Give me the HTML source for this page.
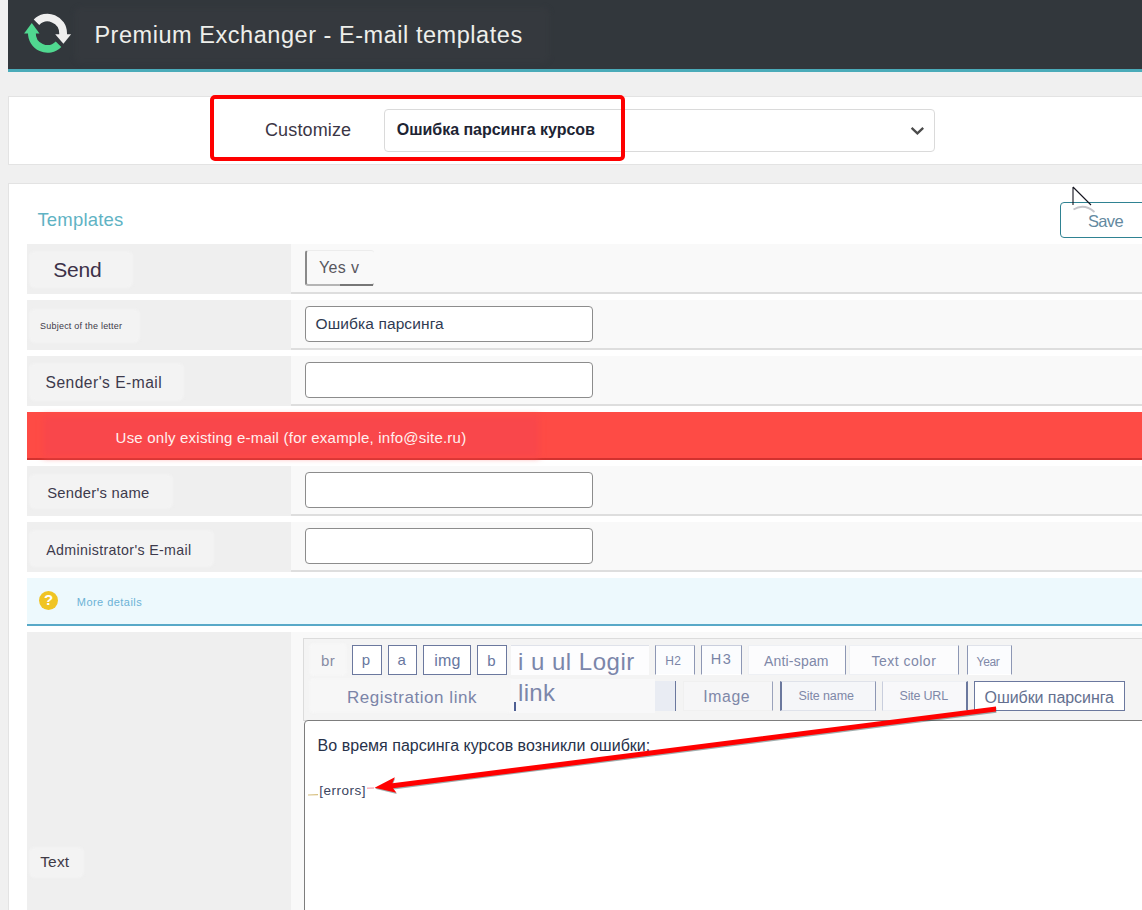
<!DOCTYPE html>
<html><head><meta charset="utf-8"><style>
*{box-sizing:border-box;margin:0;padding:0}
html,body{width:1142px;height:910px;overflow:hidden;background:#f0f0f0;font-family:"Liberation Sans",sans-serif;position:relative}
.a{position:absolute}
.t{position:absolute;white-space:nowrap;line-height:1}
.lc{position:absolute;left:27px;width:264px;background:#efefef}
.rc{position:absolute;left:291px;width:860px;background:#f9f9f9;border-bottom:2px solid #dedede}
.inp{position:absolute;left:305px;width:288px;height:36px;background:#fff;border:1px solid #8c8c8c;border-radius:4px}
.bt{position:absolute;height:30px;border:1px solid #6b789e;background:#fff}

</style></head><body>
<div class="a" style="left:8px;top:0;width:1134px;height:69px;background:#32373c"></div>
<div class="a" style="left:8px;top:69px;width:1134px;height:3px;background:#4aabb9"></div>
<div class="a" style="left:74px;top:7px;width:476px;height:56px;background:#35393e;border-radius:8px;filter:blur(2px)"></div>
<svg class="a" style="left:0;top:0" width="90" height="70" viewBox="0 0 90 70">
 <path d="M36.47 22.17 A15.6 15.6 0 0 1 63.1 33.2 L63.1 35" fill="none" stroke="#efefef" stroke-width="7.8"/>
 <path d="M55.2 34.2 L71.1 34.2 L63.4 43.8 Z" fill="#efefef"/>
 <path d="M31.9 32.5 A15.6 15.6 0 0 0 58.53 44.23" fill="none" stroke="#50d890" stroke-width="7.8"/>
 <path d="M24.1 33.6 L39.5 33.6 L31.8 22.9 Z" fill="#50d890"/>
</svg>
<div class="a" style="left:8px;top:96px;width:1140px;height:69px;background:#fff;border:1px solid #e3e3e3"></div>
<div class="a" style="left:384px;top:109px;width:551px;height:43px;background:#fff;border:1px solid #dadada;border-radius:4px"></div>
<svg class="a" style="left:905px;top:120px" width="24" height="20" viewBox="0 0 24 20"><path d="M6.6 7.9 L12.4 13.4 L18.2 7.9" fill="none" stroke="#4b4b4b" stroke-width="2.3"/></svg>

<div class="a" style="left:8px;top:183px;width:1140px;height:740px;background:#fff;border:1px solid #e3e3e3"></div>
<div class="a" style="left:1060px;top:202px;width:100px;height:36px;border:1.6px solid #2f8292;border-radius:4px;background:#fff"></div>

<div class="lc" style="top:244px;height:50px"></div><div class="rc" style="top:244px;height:50px"></div>
<div class="lc" style="top:300px;height:50px"></div><div class="rc" style="top:300px;height:50px"></div>
<div class="lc" style="top:356px;height:50px"></div><div class="rc" style="top:356px;height:50px"></div>
<div class="a" style="left:27px;top:412px;width:1120px;height:48px;background:#fe4b45;border-bottom:2px solid #d2322f"></div>
<div class="a" style="left:43px;top:416px;width:496px;height:41px;background:#f9474b;filter:blur(3px)"></div>
<div class="lc" style="top:466px;height:50px"></div><div class="rc" style="top:466px;height:50px"></div>
<div class="lc" style="top:522px;height:50px"></div><div class="rc" style="top:522px;height:50px"></div>
<div class="a" style="left:27px;top:578px;width:1120px;height:48px;background:#edf9fd;border-bottom:2px solid #58a9c8"></div>
<div class="lc" style="top:632px;height:300px"></div><div class="a" style="left:291px;top:632px;width:860px;height:300px;background:#f9f9f9"></div>


<div class="a" style="left:29px;top:251px;width:104px;height:37px;background:#f3f3f3;border-radius:6px;filter:blur(1px)"></div>
<div class="a" style="left:29px;top:309px;width:111px;height:34px;background:#f3f3f3;border-radius:6px;filter:blur(1px)"></div>
<div class="a" style="left:29px;top:363px;width:155px;height:38px;background:#f3f3f3;border-radius:6px;filter:blur(1px)"></div>
<div class="a" style="left:29px;top:474px;width:144px;height:35px;background:#f3f3f3;border-radius:6px;filter:blur(1px)"></div>
<div class="a" style="left:29px;top:530px;width:185px;height:37px;background:#f3f3f3;border-radius:6px;filter:blur(1px)"></div>
<div class="a" style="left:29px;top:847px;width:55px;height:31px;background:#f3f3f3;border-radius:6px;filter:blur(1px)"></div>
<div class="a" style="left:305px;top:250px;width:69px;height:36px;background:#f9f9f9;border-left:2px solid #8a8a8a;border-bottom:2px solid #b5b5b5;border-top:1px solid #ececec;border-radius:3px"></div>
<div class="a" style="left:340px;top:284px;width:33px;height:2px;background:#777"></div>
<div class="inp" style="top:306px"></div>
<div class="inp" style="top:362px"></div>
<div class="inp" style="top:472px"></div>
<div class="inp" style="top:528px"></div>
<div class="a" style="left:38.9px;top:590.8px;width:19.4px;height:19.4px;border-radius:50%;background:#f0c424"></div>
<div class="a" style="left:38.9px;top:592px;width:19.4px;text-align:center;font-size:15px;line-height:1;font-weight:bold;color:#fff">?</div>

<div class="a" style="left:303px;top:638px;width:850px;height:83px;background:#f4f4f4;border:1px solid #dcdcdc"></div>
<div class="a" style="left:309px;top:643px;width:38px;height:33px;background:#f7f7f7;border-radius:5px;filter:blur(1px)"></div>
<div class="a" style="left:309px;top:678px;width:205px;height:35px;background:#f7f7f7;border-radius:5px;filter:blur(1px)"></div>
<div class="bt" style="left:352px;top:645px;width:30px"></div>
<div class="bt" style="left:388px;top:645px;width:29px"></div>
<div class="bt" style="left:423px;top:645px;width:48px"></div>
<div class="bt" style="left:477px;top:645px;width:30px"></div>
<div class="a" style="left:511px;top:645px;width:138px;height:30px;background:#fdfdfe;border-top:1px solid #dfe2ea"></div>
<div class="bt" style="left:655px;top:645px;width:40px;border-color:#c9cedd #8d97b4 #fff #8d97b4;background:#fbfcfe"></div>
<div class="bt" style="left:701px;top:645px;width:41px;border-color:#c9cedd #8d97b4 #fff #8d97b4;background:#fbfcfe"></div>
<div class="bt" style="left:748px;top:645px;width:98px;border-color:#eef0f4 #8d97b4 #eef0f4 #eef0f4;background:#fcfcfd"></div>
<div class="bt" style="left:849px;top:645px;width:110px;border-color:#eef0f4 #8d97b4 #eef0f4 #eef0f4;background:#fcfcfd"></div>
<div class="bt" style="left:967px;top:645px;width:45px;border-color:#dfe2ea #8d97b4 #fff #8d97b4;background:#fbfcfe"></div>
<div class="a" style="left:511px;top:679px;width:144px;height:34px;background:#f8f8f9"></div>
<div class="a" style="left:655px;top:681px;width:21px;height:30px;background:#e9ecf3;border-right:1.5px solid #6b789e"></div>
<div class="a" style="left:514px;top:702px;width:2px;height:9px;background:#4e5f93"></div>
<div class="bt" style="left:683px;top:681px;width:90px;border-color:#f0f0f0 #9aa2bb #f0f0f0 #f0f0f0;background:#f6f6f7"></div>
<div class="bt" style="left:780px;top:681px;width:96px;border-color:#dfe2ea #8d97b4 #dfe2ea #6b789e;border-left-width:2px;background:#f5f6f9"></div>
<div class="bt" style="left:882px;top:681px;width:86px;border-color:#eef0f4 #6b789e #eef0f4 #c9cedd;border-right-width:2px;background:#f8f8fa"></div>
<div class="bt" style="left:974px;top:681px;width:151px"></div>
<div class="a" style="left:304px;top:720px;width:850px;height:200px;background:#fff;border:1px solid #7d7d7d;border-radius:4px"></div>

<div class="t" style="left:94.40px;top:24.33px;font-size:23.5px;letter-spacing:0.543px;color:#eeefeb;">Premium Exchanger - E-mail templates</div>
<div class="t" style="left:265.00px;top:121.41px;font-size:18px;letter-spacing:0.125px;color:#3b3645;">Customize</div>
<div class="t" style="left:396.80px;top:122.22px;font-size:16px;letter-spacing:-0.024px;color:#1d2433;font-weight:bold">Ошибка парсинга курсов</div>
<div class="t" style="left:37.40px;top:210.66px;font-size:18.5px;letter-spacing:0.188px;color:#5fb3c4;">Templates</div>
<div class="t" style="left:1088.00px;top:212.57px;font-size:16.5px;letter-spacing:-0.667px;color:#6389a0;">Save</div>
<div class="t" style="left:53.20px;top:259.00px;font-size:21px;letter-spacing:-0.167px;color:#3c3148;">Send</div>
<div class="t" style="left:40.00px;top:322.16px;font-size:9px;letter-spacing:0.225px;color:#3e3a48;">Subject of the letter</div>
<div class="t" style="left:45.60px;top:375.08px;font-size:15.6px;letter-spacing:0.464px;color:#3d3a4c;">Sender's E-mail</div>
<div class="t" style="left:115.60px;top:429.73px;font-size:15px;letter-spacing:0.216px;color:#fff0ee;">Use only existing e-mail (for example, info@site.ru)</div>
<div class="t" style="left:47.20px;top:486.21px;font-size:14.8px;letter-spacing:0.250px;color:#3d3a4c;">Sender's name</div>
<div class="t" style="left:46.20px;top:542.55px;font-size:14.2px;letter-spacing:0.357px;color:#3d3a4c;">Administrator's E-mail</div>
<div class="t" style="left:76.80px;top:596.75px;font-size:11px;letter-spacing:0.455px;color:#6cb2d6;">More details</div>
<div class="t" style="left:40.20px;top:854.37px;font-size:15.5px;letter-spacing:0.167px;color:#3f3a46;">Text</div>
<div class="t" style="left:319.00px;top:260.02px;font-size:16px;letter-spacing:0.375px;color:#58575e;">Yes v</div>
<div class="t" style="left:315.60px;top:316.27px;font-size:15.5px;letter-spacing:0.107px;color:#2f3a52;">Ошибка парсинга</div>
<div class="t" style="left:317.60px;top:738.32px;font-size:16px;letter-spacing:0.025px;color:#27324a;">Во время парсинга курсов возникли ошибки:</div>
<div class="t" style="left:319.20px;top:783.78px;font-size:13.5px;letter-spacing:0.500px;color:#3b4560;">[errors]</div>
<div class="t" style="left:321.00px;top:652.52px;font-size:15px;letter-spacing:0.500px;color:#878ca4;">br</div>
<div class="t" style="left:361.80px;top:651.92px;font-size:15px;letter-spacing:0.000px;color:#6877a0;">p</div>
<div class="t" style="left:397.60px;top:651.92px;font-size:15px;letter-spacing:0.000px;color:#6877a0;">a</div>
<div class="t" style="left:434.20px;top:652.82px;font-size:16px;letter-spacing:0.250px;color:#6877a0;">img</div>
<div class="t" style="left:487.20px;top:652.72px;font-size:15px;letter-spacing:0.000px;color:#6877a0;">b</div>
<div class="t" style="left:518.00px;top:649.88px;font-size:24px;letter-spacing:0.500px;color:#7b86aa;">i u ul Logir</div>
<div class="t" style="left:665.20px;top:654.54px;font-size:12px;letter-spacing:0.500px;color:#7a84a6;">H2</div>
<div class="t" style="left:710.80px;top:651.78px;font-size:14.5px;letter-spacing:1.500px;color:#7a84a6;">H3</div>
<div class="t" style="left:764.00px;top:653.83px;font-size:14px;letter-spacing:0.187px;color:#7f88a8;">Anti-spam</div>
<div class="t" style="left:871.40px;top:653.83px;font-size:14px;letter-spacing:0.500px;color:#7f88a8;">Text color</div>
<div class="t" style="left:976.60px;top:655.74px;font-size:12px;letter-spacing:-0.333px;color:#7f88a8;">Year</div>
<div class="t" style="left:347.00px;top:689.22px;font-size:17px;letter-spacing:0.531px;color:#7b84a8;">Registration link</div>
<div class="t" style="left:518.00px;top:681.18px;font-size:24px;letter-spacing:0.333px;color:#7b86aa;">link</div>
<div class="t" style="left:703.20px;top:689.40px;font-size:15.8px;letter-spacing:0.625px;color:#7f88a8;">Image</div>
<div class="t" style="left:798.60px;top:690.19px;font-size:12.5px;letter-spacing:-0.125px;color:#7f88a8;">Site name</div>
<div class="t" style="left:899.60px;top:690.19px;font-size:12.5px;letter-spacing:-0.214px;color:#7f88a8;">Site URL</div>
<div class="t" style="left:984.60px;top:689.82px;font-size:16px;letter-spacing:-0.071px;color:#64708f;">Ошибки парсинга</div>
<div class="a" style="left:210px;top:95px;width:415px;height:66px;border:4px solid #fe0000;border-radius:5px"></div>
<svg class="a" style="left:0;top:0" width="1142" height="910" viewBox="0 0 1142 910">
 <path d="M374.6 787.7 L394.8 777.2 L392.4 783.3 L996 706.6 L996 711.6 L393 788.3 L396.5 792.8 Z" fill="#2c4a4a" opacity="0.45" transform="translate(0.4,1.1)"/>
 <path d="M374.6 787.7 L394.8 777.2 L392.4 783.3 L996 706.6 L996 711.6 L393 788.3 L396.5 792.8 Z" fill="#ff0000"/>
 <path d="M367 788.2 L374 788" stroke="#f6a0b0" stroke-width="1.5" opacity="0.8"/>
 <path d="M308 795 L318 794.6" stroke="#d8c080" stroke-width="1.2"/>
 <defs><filter id="gb" x="-50%" y="-50%" width="200%" height="200%"><feGaussianBlur stdDeviation="0.7"/></filter></defs>
 <path d="M1073.5 207 L1073.5 228" stroke="#9a9aa4" stroke-width="1.8" opacity="0.4" fill="none" filter="url(#gb)"/>
 <path d="M1073.5 209.5 Q1084 203 1094.5 212" stroke="#8a8a95" stroke-width="1.8" opacity="0.5" fill="none" filter="url(#gb)"/>
 <path d="M1073 187 L1073 205 M1073 187 L1091 205" stroke="#151520" stroke-width="1.1" fill="none"/>
</svg>

</body></html>
